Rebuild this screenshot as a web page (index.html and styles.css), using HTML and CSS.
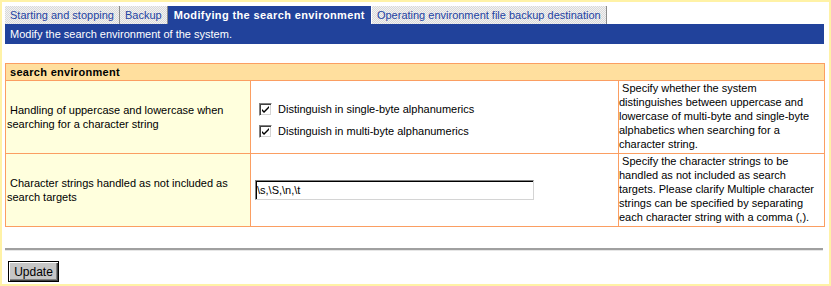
FILE: index.html
```html
<!DOCTYPE html>
<html lang="en">
<head>
    <meta charset="UTF-8">
    <title>Modifying the search environment</title>
    <link rel="stylesheet" href="styles.css">
</head>
<body>
    <div class="frame">
        <div class="tabs">
            <a class="tab" href="#">Starting and stopping</a>
            <a class="tab" href="#">Backup</a>
            <a class="tab active" href="#">Modifying the search environment</a>
            <a class="tab" href="#">Operating environment file backup destination</a>
        </div>
        <div class="title-bar">Modify the search environment of the system.</div>

        <table class="settings">
            <colgroup>
                <col class="col-label">
                <col class="col-value">
                <col class="col-help">
            </colgroup>
            <tr>
                <th colspan="3">search environment</th>
            </tr>
            <tr>
                <td class="label">&nbsp;Handling of uppercase and lowercase when searching for a character string</td>
                <td class="value">
                    <div class="checks">
                        <label class="check"><span class="box"><svg width="9" height="9" viewBox="0 0 9 9"><path d="M1 4 L3 6 L8 1 L8 3 L3 8 L1 6 Z" fill="#000"/></svg></span>Distinguish in single-byte alphanumerics</label>
                        <label class="check"><span class="box"><svg width="9" height="9" viewBox="0 0 9 9"><path d="M1 4 L3 6 L8 1 L8 3 L3 8 L1 6 Z" fill="#000"/></svg></span>Distinguish in multi-byte alphanumerics</label>
                    </div>
                </td>
                <td class="help">&nbsp;Specify whether the system distinguishes between uppercase and lowercase of multi-byte and single-byte alphabetics when searching for a character string.</td>
            </tr>
            <tr>
                <td class="label">&nbsp;Character strings handled as not included as search targets</td>
                <td class="value">
                    <input type="text" class="text-field" value="\s,\S,\n,\t">
                </td>
                <td class="help">&nbsp;Specify the character strings to be handled as not included as search targets. Please clarify Multiple character strings can be specified by separating each character string with a comma (,).</td>
            </tr>
        </table>

        <div class="rule"></div>
        <button class="update" type="button">Update</button>
    </div>
</body>
</html>
```

FILE: styles.css
```css
body {
    margin: 0;
    font-family: "Liberation Sans", Arial, sans-serif;
    font-size: 11px;
    color: #000;
}
.frame {
    width: 831px;
    height: 286px;
    box-sizing: border-box;
    border: 2px solid #fff2a6;
    padding: 4px 4px 0 3px;
    background: #fff;
}
.tabs {
    display: flex;
    height: 18px;
}
.tab {
    display: flex;
    align-items: center;
    padding: 0 5px 0 5px;
    color: #2343a3;
    text-decoration: none;
    background: #ececec repeating-conic-gradient(#d9d9d9 0 25%, #f2f2f2 0 50%) 0 0 / 2px 2px;
    border-right: 1px solid #8c8c8c;
}
.tab.active {
    padding: 0 6px 0 6px;
    background: #21429b;
    color: #fff;
    font-weight: bold;
    letter-spacing: 0.38px;
    border-right: 1px solid #fff;
}
.title-bar {
    width: 819px;
    height: 20px;
    box-sizing: border-box;
    padding-left: 5px;
    line-height: 20px;
    background: #21429b;
    color: #fff;
}
.settings {
    width: 819px;
    margin-top: 19px;
    border-collapse: collapse;
    table-layout: fixed;
}
.col-label { width: 245px; }
.col-value { width: 368px; }
.col-help { width: 206px; }
.settings th,
.settings td {
    border: 1px solid #fb9e62;
    padding: 0 1px;
    line-height: 14px;
}
.settings th {
    height: 16px;
    text-align: left;
    padding-left: 4px;
    background: #ffdf9e;
    font-weight: bold;
    letter-spacing: 0.3px;
}
.settings td {
    height: 72px;
    vertical-align: middle;
}
.settings td.label {
    background: #ffffdd;
    padding-left: 1px;
}
.settings td.value {
    padding-left: 4px;
}
.settings td.help {
    padding: 0 6px 0 0;
    line-height: 13.9px;
}
.checks {
    padding-top: 6px;
}
.check {
    display: flex;
    align-items: center;
    height: 22px;
    padding-left: 4px;
}
.box {
    display: inline-flex;
    align-items: center;
    justify-content: center;
    width: 13px;
    height: 13px;
    box-sizing: border-box;
    margin-right: 6px;
    background: #fff;
    border: 1px solid;
    border-color: #808080 #ffffff #ffffff #808080;
    box-shadow: inset 1px 1px 0 #404040, inset -1px -1px 0 #d4d4d4;
}
.text-field {
    width: 279px;
    height: 20px;
    box-sizing: border-box;
    margin: 0;
    padding: 0 1px;
    font-family: "Liberation Sans", Arial, sans-serif;
    font-size: 11px;
    border: 1px solid;
    border-color: #808080 #d4d4d4 #d4d4d4 #808080;
    box-shadow: inset 1px 1px 0 #000;
    outline: none;
}
.rule {
    width: 818px;
    height: 2px;
    margin-top: 21px;
    background: #a0a0a0;
    border-bottom: 1px solid #e6e6e6;
}
.update {
    display: block;
    margin: 10px 0 0 3px;
    width: 51px;
    height: 21px;
    padding: 0;
    font-family: "Liberation Sans", Arial, sans-serif;
    font-size: 12px;
    color: #000;
    background: #c6c6c6;
    border: 1px solid #000;
    box-shadow: inset 1px 1px 0 #fff, inset -1px -1px 0 #404040, inset -2px -2px 0 #808080;
}
```
